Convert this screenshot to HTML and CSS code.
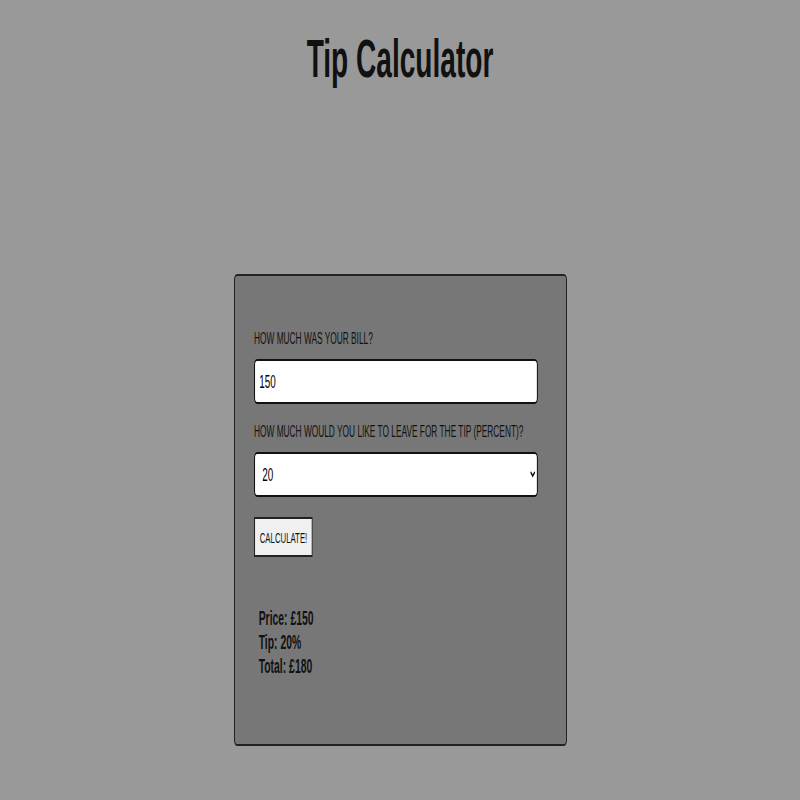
FILE: index.html
```html
<!DOCTYPE html>
<html lang="en">
<head>
<meta charset="utf-8">
<title>Tip Calculator</title>
<link rel="stylesheet" href="styles.css">
</head>
<body>
  <h1 class="title">Tip Calculator</h1>
  <form class="card" onsubmit="return false">
    <label class="label" for="bill">HOW MUCH WAS YOUR BILL?</label>
    <input class="field" id="bill" type="text" value="150">
    <label class="label" for="tip">HOW MUCH WOULD YOU LIKE TO LEAVE FOR THE TIP (PERCENT)?</label>
    <select class="field select" id="tip">
      <option>10</option>
      <option>15</option>
      <option selected>20</option>
      <option>25</option>
    </select>
    <button class="btn" type="button">CALCULATE!</button>
    <div class="results">
      <div class="line">Price: £150</div>
      <div class="line">Tip: 20%</div>
      <div class="line">Total: £180</div>
    </div>
  </form>
</body>
</html>
```
FILE: styles.css
```css
html, body {
  margin: 0;
  padding: 0;
  background: #999999;
}

body {
  font-family: "Liberation Sans", Arial, sans-serif;
  color: #111;
}

/* the reference is horizontally compressed: text and controls are squeezed to 52% width */
.title {
  margin: 27px 0 185px;
  font-size: 54px;
  line-height: 62px;
  font-weight: bold;
  text-align: center;
  transform: scaleX(0.52);
  transform-origin: 50% 0;
}

.card {
  box-sizing: border-box;
  width: 333px;
  margin: 0 auto;
  padding: 54px 19px 66px;
  background: #777777;
  border-style: solid;
  border-color: #222;
  border-width: 2px 1px;
  border-radius: 3px / 6px;
  display: flex;
  flex-direction: column;
  align-items: flex-start;
}

.label {
  display: block;
  font-size: 16px;
  line-height: 18px;
  margin-bottom: 11px;
  white-space: nowrap;
  color: #111;
  transform: scaleX(0.52);
  transform-origin: 0 0;
}

.field {
  box-sizing: border-box;
  width: 546px;
  height: 45px;
  margin: 0 0 19px;
  padding: 0 8px;
  border: 2px solid #111;
  border-radius: 6px;
  background: #fff;
  font-family: "Liberation Sans", Arial, sans-serif;
  font-size: 19px;
  color: #000;
  outline: none;
  transform: scaleX(0.52);
  transform-origin: 0 0;
}

.select {
  margin-bottom: 20px;
  padding-left: 10px;
}

.btn {
  box-sizing: border-box;
  height: 40px;
  padding: 0 9px;
  border: 2px solid #222;
  border-radius: 0;
  background: #f0f0f0;
  font-family: "Liberation Sans", Arial, sans-serif;
  font-size: 15px;
  color: #111;
  margin-bottom: 49px;
  transform: scaleX(0.52);
  transform-origin: 0 0;
}

.results {
  padding-left: 9px;
  font-size: 20px;
  line-height: 24px;
  font-weight: bold;
  color: #111;
  transform: scaleX(0.52);
  transform-origin: 0 0;
}
```
